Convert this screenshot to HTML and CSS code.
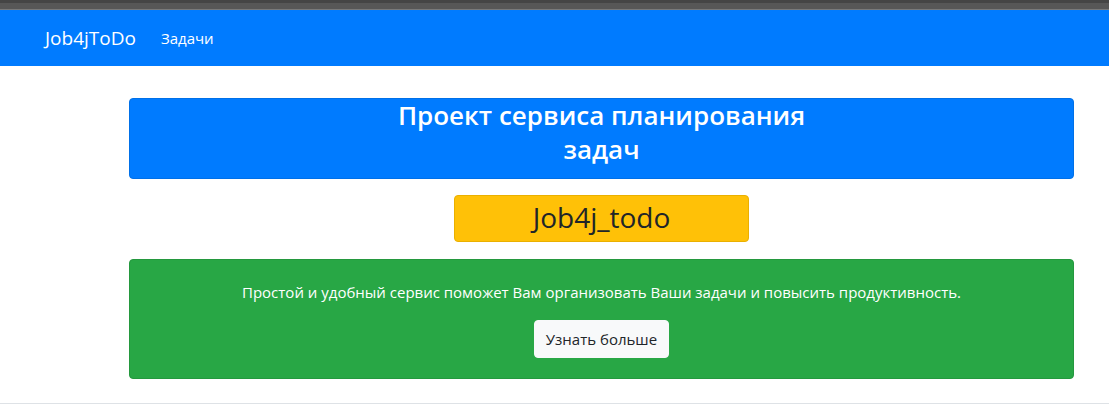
FILE: index.html
```html
<!DOCTYPE html>
<html lang="ru">
<head>
<meta charset="utf-8">
<title>Job4jToDo</title>
<link rel="stylesheet" href="styles.css">
</head>
<body>
<div class="topbar"></div>
<nav class="navbar">
  <a class="brand" href="#">Job4jToDo</a>
  <a class="nav-link" href="#">Задачи</a>
</nav>
<main class="main">
  <div class="title-box">
    <h3 class="title">Проект сервиса планирования задач</h3>
  </div>
  <div class="name-box">Job4j_todo</div>
  <div class="info-box">
    <p class="info-text">Простой и удобный сервис поможет Вам организовать Ваши задачи и повысить продуктивность.</p>
    <button class="btn-light" type="button">Узнать больше</button>
  </div>
</main>
<footer class="footer"></footer>
</body>
</html>
```
FILE: styles.css
```css
* { box-sizing: border-box; }
body {
  margin: 0;
  font-family: "Open Sans", "Noto Sans", sans-serif;
  color: #212529;
  background: #fff;
}
.topbar {
  height: 10px;
  background: linear-gradient(#454545 0, #454545 3px, #575757 3px, #575757 9px, #7a7a7a 9px);
}
.navbar {
  height: 56px;
  background: #007bff;
  display: flex;
  align-items: center;
  padding-left: 45px;
}
.brand {
  color: #fff;
  text-decoration: none;
  font-size: 19px;
  line-height: 30px;
  margin-right: 17px;
}
.nav-link {
  color: #fff;
  text-decoration: none;
  font-size: 15px;
  line-height: 24px;
  padding: 0 8px 0 8px;
}
.main {
  margin: 32px 35px 0 129px;
}
.title-box {
  background: #007bff;
  border: 1px solid #0070e8;
  border-radius: 4px;
  padding: 0 0 12px;
  height: 81px;
}
.title {
  width: 460px;
  margin: 0 auto;
  text-align: center;
  color: #fff;
  font-size: 26px;
  line-height: 33.6px;
  font-weight: 600;
}
.name-box {
  width: 295px;
  height: 47px;
  margin: 16px auto 17px;
  background: #ffc107;
  border: 1px solid #eab000;
  border-radius: 4px;
  text-align: center;
  font-size: 28px;
  line-height: 42px;
  font-weight: 500;
  color: #212529;
}
.info-box {
  background: #28a745;
  border: 1px solid #24983e;
  border-radius: 4px;
  padding: 20px;
  text-align: center;
  color: #fff;
  height: 120px;
}
.info-text {
  margin: 0 0 16px;
  font-size: 15px;
  line-height: 24px;
}
.btn-light {
  background: #f8f9fa;
  border: 1px solid #f8f9fa;
  border-radius: 4px;
  padding: 6px 11px;
  font-family: inherit;
  font-size: 15px;
  line-height: 24px;
  color: #212529;
  height: 38px;
}
.footer {
  margin-top: 24px;
  border-top: 1px solid #dee2e6;
  height: 11px;
}
```
